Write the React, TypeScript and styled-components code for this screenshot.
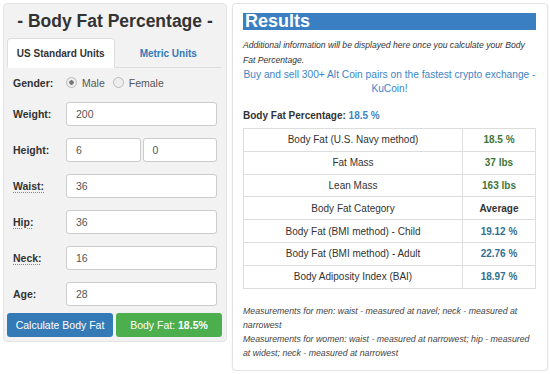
import React from 'react'
import styled, { createGlobalStyle } from 'styled-components'

const Global = createGlobalStyle`
  html, body { margin: 0; padding: 0; background: #fff; }
  body { font-family: "Liberation Sans", Arial, sans-serif; color: #333; }
  * { box-sizing: border-box; }
`

const Page = styled.div`
  display: flex;
  align-items: flex-start;
  gap: 5px;
  padding: 3px 2px 0 3px;
  width: 550px;
`

const Calc = styled.div`
  width: 224px;
  background: #f2f2f2;
  border: 1px solid #e3e3e3;
  border-radius: 4px;
  padding: 0 3px 4px 3px;
`

const Title = styled.h2`
  margin: 0;
  height: 34px;
  font-size: 17.5px;
  font-weight: bold;
  text-align: center;
  line-height: 34px;
  color: #333;
`

const Tabs = styled.div`
  display: flex;
  border-bottom: 1px solid #ddd;
  margin-right: 1px;
`

const Tab = styled.div<{ $active?: boolean }>`
  flex: 1;
  height: 30px;
  margin-bottom: -1px;
  line-height: 29px;
  text-align: center;
  font-size: 10px;
  font-weight: bold;
  color: ${p => (p.$active ? '#333' : '#337ab7')};
  background: ${p => (p.$active ? '#fff' : 'transparent')};
  border: 1px solid ${p => (p.$active ? '#ddd' : 'transparent')};
  border-bottom-color: ${p => (p.$active ? '#fff' : 'transparent')};
  border-radius: 4px 4px 0 0;
`

const Form = styled.div`
  display: flex;
  flex-direction: column;
  gap: 12px;
  padding: 7px 6px 0 6px;
`

const Row = styled.div<{ $short?: boolean }>`
  display: flex;
  align-items: center;
  height: ${p => (p.$short ? '15px' : '24px')};
`

const Label = styled.label<{ $dotted?: boolean }>`
  width: 53px;
  font-size: 10.5px;
  font-weight: bold;
  color: #333;
  text-decoration: ${p => (p.$dotted ? 'underline dotted #888' : 'none')};
  text-underline-offset: 2px;
`

const Radios = styled.div`
  display: flex;
  align-items: center;
  gap: 8px;
  font-size: 10.5px;
  color: #555;
`

const Radio = styled.span<{ $on?: boolean }>`
  display: inline-flex;
  align-items: center;
  gap: 5px;
  &::before {
    content: '';
    width: 9px;
    height: 9px;
    border-radius: 50%;
    border: 1px solid #bbb;
    background: ${p => (p.$on ? 'radial-gradient(circle, #777 0 2px, #eee 2.5px)' : '#eee')};
  }
`

const Inputs = styled.div`
  flex: 1;
  display: flex;
  gap: 2px;
`

const Input = styled.div`
  flex: 1;
  height: 24px;
  background: #fff;
  border: 1px solid #ccc;
  border-radius: 3px;
  padding-left: 9px;
  font-size: 10.5px;
  line-height: 22px;
  color: #555;
`

const Buttons = styled.div`
  display: flex;
  gap: 3px;
  margin-top: 7px;
  margin-right: 1px;
`

const Button = styled.div<{ $kind: 'blue' | 'green' }>`
  flex: 1;
  height: 24px;
  border-radius: 3px;
  background: ${p => (p.$kind === 'blue' ? '#337ab7' : '#4cae4c')};
  color: #fff;
  font-size: 10.5px;
  line-height: 24px;
  text-align: center;
  b { font-weight: bold; }
`

const Results = styled.div`
  width: 316px;
  min-height: 367px;
  background: #fff;
  border: 1px solid #e3e3e3;
  border-radius: 4px;
  box-shadow: 0 1px 2px rgba(0, 0, 0, 0.08);
  padding: 9px 11px 10px 10px;
`

const Heading = styled.h3`
  margin: 0;
  height: 17px;
  background: #3a7fc1;
  color: #fff;
  font-size: 18px;
  font-weight: bold;
  line-height: 17px;
  padding-left: 2px;
`

const Info = styled.p`
  margin: 8px 0 0 0;
  font-size: 8.6px;
  font-style: italic;
  line-height: 15px;
  color: #333;
`

const Promo = styled.a`
  display: block;
  text-align: center;
  font-size: 10.2px;
  line-height: 14px;
  color: #3d85c6;
  text-decoration: none;
`

const Summary = styled.p`
  margin: 13px 0 0 0;
  font-size: 10px;
  font-weight: bold;
  line-height: 14px;
  span { color: #3d85c6; }
`

const Table = styled.table`
  width: 100%;
  margin-top: 5px;
  border-collapse: collapse;
  font-size: 10px;
  td {
    border: 1px solid #ddd;
    height: 22.8px;
    padding: 0;
    text-align: center;
  }
  td:last-child { width: 73px; font-weight: bold; }
`

const Value = styled.td<{ $tone: 'green' | 'blue' | 'plain' }>`
  color: ${p => (p.$tone === 'green' ? '#3c763d' : p.$tone === 'blue' ? '#31708f' : '#333')};
`

const Notes = styled.div`
  margin-top: 15px;
  font-size: 8.75px;
  font-style: italic;
  line-height: 14px;
  color: #444;
`

const rows: [string, string, 'green' | 'blue' | 'plain'][] = [
  ['Body Fat (U.S. Navy method)', '18.5 %', 'green'],
  ['Fat Mass', '37 lbs', 'green'],
  ['Lean Mass', '163 lbs', 'green'],
  ['Body Fat Category', 'Average', 'plain'],
  ['Body Fat (BMI method) - Child', '19.12 %', 'blue'],
  ['Body Fat (BMI method) - Adult', '22.76 %', 'blue'],
  ['Body Adiposity Index (BAI)', '18.97 %', 'blue'],
]

export default function App() {
  return (
    <>
      <Global />
      <Page>
        <Calc>
          <Title>- Body Fat Percentage -</Title>
          <Tabs>
            <Tab $active>US Standard Units</Tab>
            <Tab>Metric Units</Tab>
          </Tabs>
          <Form>
            <Row $short>
              <Label>Gender:</Label>
              <Radios>
                <Radio $on>Male</Radio>
                <Radio>Female</Radio>
              </Radios>
            </Row>
            <Row>
              <Label>Weight:</Label>
              <Inputs><Input>200</Input></Inputs>
            </Row>
            <Row>
              <Label>Height:</Label>
              <Inputs><Input>6</Input><Input>0</Input></Inputs>
            </Row>
            <Row>
              <Label $dotted>Waist:</Label>
              <Inputs><Input>36</Input></Inputs>
            </Row>
            <Row>
              <Label $dotted>Hip:</Label>
              <Inputs><Input>36</Input></Inputs>
            </Row>
            <Row>
              <Label $dotted>Neck:</Label>
              <Inputs><Input>16</Input></Inputs>
            </Row>
            <Row>
              <Label>Age:</Label>
              <Inputs><Input>28</Input></Inputs>
            </Row>
          </Form>
          <Buttons>
            <Button $kind="blue">Calculate Body Fat</Button>
            <Button $kind="green">Body Fat: <b>18.5%</b></Button>
          </Buttons>
        </Calc>
        <Results>
          <Heading>Results</Heading>
          <Info>Additional information will be displayed here once you calculate your Body Fat Percentage.</Info>
          <Promo href="#">Buy and sell 300+ Alt Coin pairs on the fastest crypto exchange - KuCoin!</Promo>
          <Summary>Body Fat Percentage: <span>18.5 %</span></Summary>
          <Table>
            <tbody>
              {rows.map(([k, v, t]) => (
                <tr key={k}>
                  <td>{k}</td>
                  <Value $tone={t}>{v}</Value>
                </tr>
              ))}
            </tbody>
          </Table>
          <Notes>
            Measurements for men: waist - measured at navel; neck - measured at narrowest
            <br />
            Measurements for women: waist - measured at narrowest; hip - measured at widest; neck - measured at narrowest
          </Notes>
        </Results>
      </Page>
    </>
  )
}
